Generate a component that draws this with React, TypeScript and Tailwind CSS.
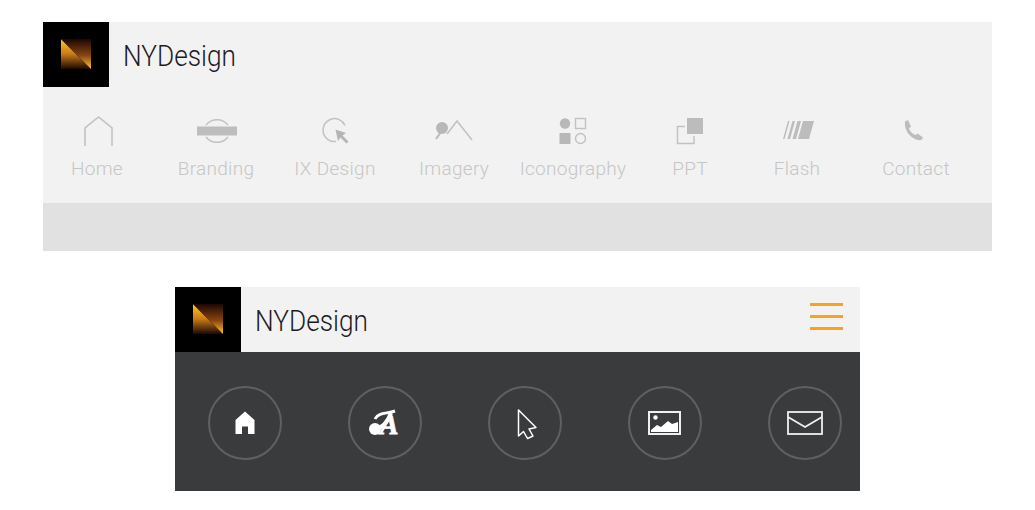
import type { ReactNode } from "react";

const grey = "#c2c2c2";

function Logo({ id }: { id: string }) {
    return (
        <div className="flex h-[65px] w-[66px] shrink-0 items-center justify-center bg-black">
            <svg width="32" height="32" viewBox="0 0 32 32">
                <defs>
                    <linearGradient id={`${id}-a`} x1="0" y1="0" x2="0" y2="1">
                        <stop offset="0" stopColor="#ffcb20" />
                        <stop offset="0.5" stopColor="#c87a18" />
                        <stop offset="1" stopColor="#1c0702" />
                    </linearGradient>
                    <linearGradient id={`${id}-b`} x1="0" y1="0" x2="0" y2="1">
                        <stop offset="0" stopColor="#1c0702" />
                        <stop offset="0.55" stopColor="#8a4512" />
                        <stop offset="1" stopColor="#ffcb20" />
                    </linearGradient>
                </defs>
                <polygon points="1,0 1,30 31,30" fill={`url(#${id}-a)`} />
                <polygon points="1,0 31,0 31,30" fill={`url(#${id}-b)`} />
            </svg>
        </div>
    );
}

function Brand() {
    return (
        <span className="ml-[14px] origin-left scale-x-[0.875] pt-[1px] font-['Roboto',sans-serif] text-[30px] font-light text-[#1d1d1f]">
            NYDesign
        </span>
    );
}

const navItems: { label: string; width: string; viewBox: string; icon: ReactNode }[] = [
    {
        label: "Home",
        width: "w-[108px]",
        viewBox: "67 115 60 32",
        icon: <path d="M85 146V128L98.5 117L112 128V146" fill="none" stroke={grey} strokeWidth="1.6" />,
    },
    {
        label: "Branding",
        width: "w-[130px]",
        viewBox: "186 115 60 32",
        icon: (
            <>
                <path d="M206 125A14 14 0 0 1 228 125M206 137A14 14 0 0 0 228 137" fill="none" stroke={grey} strokeWidth="1.5" />
                <rect x="197" y="126.5" width="40" height="9" fill="#bdbdbd" />
            </>
        ),
    },
    {
        label: "IX Design",
        width: "w-[108px]",
        viewBox: "305 115 60 32",
        icon: (
            <>
                <path d="M345 125.5A11.5 11.5 0 1 0 336 141.5" fill="none" stroke={grey} strokeWidth="1.5" />
                <polygon points="335.5,129.5 346,133 342.5,135.5 348.5,141.5 346.5,143.5 340.5,137.5 338,141" fill="#b5b5b5" />
            </>
        ),
    },
    {
        label: "Imagery",
        width: "w-[130px]",
        viewBox: "424 115 60 32",
        icon: (
            <>
                <circle cx="442" cy="128" r="6" fill="#b8b8b8" />
                <path d="M436 139L441 132" fill="none" stroke="#b8b8b8" strokeWidth="2" />
                <path d="M447 134L457 121L472 140" fill="none" stroke={grey} strokeWidth="1.6" />
            </>
        ),
    },
    {
        label: "Iconography",
        width: "w-[108px]",
        viewBox: "543 115 60 32",
        icon: (
            <>
                <circle cx="565" cy="123.5" r="5.2" fill="#b8b8b8" />
                <rect x="575.5" y="118.5" width="10" height="10" fill="none" stroke={grey} strokeWidth="1.4" />
                <rect x="559.5" y="133" width="11" height="11" fill="#b8b8b8" />
                <circle cx="580.5" cy="138.5" r="5" fill="none" stroke={grey} strokeWidth="1.4" />
            </>
        ),
    },
    {
        label: "PPT",
        width: "w-[126px]",
        viewBox: "660 115 60 32",
        icon: (
            <>
                <rect x="687" y="118" width="16" height="16" fill="#bcbcbc" />
                <path d="M685 126.5H677.5V143.5H694V136" fill="none" stroke={grey} strokeWidth="1.5" />
            </>
        ),
    },
    {
        label: "Flash",
        width: "w-[88px]",
        viewBox: "767 115 60 32",
        icon: (
            <g fill="#bcbcbc">
                <polygon points="788,121 789.5,121 784.5,139 783,139" />
                <polygon points="792.5,121 795,121 790,139 787.5,139" />
                <polygon points="797.5,121 801,121 796,139 792.5,139" />
                <polygon points="803,121 814,121 809,139 798,139" />
            </g>
        ),
    },
    {
        label: "Contact",
        width: "w-[150px]",
        viewBox: "886 115 60 32",
        icon: (
            <path
                d="M905 121.5L908 120L911 126.5L909 128.5C910 131.5 912.5 134 915.5 135L917.5 133.5L923 137.5L921.5 140C914 141.5 903.5 132 905 121.5Z"
                fill="#bcbcbc"
            />
        ),
    },
];

function Circle({ viewBox, children }: { viewBox: string; children: ReactNode }) {
    return (
        <div className="flex h-[74px] w-[74px] items-center justify-center rounded-full border-2 border-[#5f6062]">
            <svg width="50" height="40" viewBox={viewBox}>
                {children}
            </svg>
        </div>
    );
}

export default function App() {
    return (
        <div className="min-h-[510px] bg-white pt-[22px]">
            <section className="ml-[43px] w-[949px] bg-[#f2f2f2]">
                <div className="flex items-center">
                    <Logo id="top" />
                    <Brand />
                </div>
                <div className="flex h-[116px] pt-[28px]">
                    {navItems.map((item) => (
                        <div key={item.label} className={`flex flex-col items-center ${item.width}`}>
                            <svg width="60" height="32" viewBox={item.viewBox}>
                                {item.icon}
                            </svg>
                            <span className="mt-[10px] whitespace-nowrap font-['Roboto',sans-serif] text-[19px] font-light leading-6 tracking-[0.3px] text-[#c6c6c6]">
                                {item.label}
                            </span>
                        </div>
                    ))}
                </div>
                <div className="h-[48px] bg-[#e1e1e1]" />
            </section>

            <section className="ml-[175px] mt-[36px] w-[685px]">
                <div className="flex items-center bg-[#f2f2f2]">
                    <Logo id="bottom" />
                    <Brand />
                    <div className="mb-[6px] ml-auto mr-[17px] flex w-[33px] flex-col gap-[9px]">
                        <div className="h-[3px] bg-[#faa21a]" />
                        <div className="h-[3px] bg-[#faa21a]" />
                        <div className="h-[3px] bg-[#faa21a]" />
                    </div>
                </div>
                <div className="flex h-[139px] items-center gap-[66px] bg-[#3a3b3d] pl-[33px] pt-[2px]">
                    <Circle viewBox="0 0 50 40">
                        <path d="M25 8.5L34.5 17V31H28V23.5H22V31H15.5V17Z" fill="#fff" />
                    </Circle>
                    <Circle viewBox="0 0 50 40">
                        <circle cx="15" cy="26" r="6" fill="#fff" />
                        <path d="M15 26C23 25 28 18 31 10" fill="none" stroke="#fff" strokeWidth="4" />
                        <path d="M15 16C18 9 27 11 35 8" fill="none" stroke="#fff" strokeWidth="3" />
                        <text
                            x="29"
                            y="31"
                            textAnchor="middle"
                            fill="#fff"
                            stroke="#fff"
                            strokeWidth="0.8"
                            fontFamily="'Liberation Serif', serif"
                            fontStyle="italic"
                            fontWeight="700"
                            fontSize="28"
                        >
                            A
                        </text>
                    </Circle>
                    <Circle viewBox="0 0 50 40">
                        <path d="M18.5 7V33L23.5 28.5L27.5 35.5L33 33L29 26L36 24.5Z" fill="none" stroke="#fff" strokeWidth="1.5" strokeLinejoin="round" />
                    </Circle>
                    <Circle viewBox="0 0 50 40">
                        <rect x="9" y="9" width="31" height="22" fill="none" stroke="#f0f0f0" strokeWidth="2" />
                        <circle cx="15.5" cy="14.5" r="2.2" fill="#fff" />
                        <path d="M11 27L17 22L21 24L28 18L32 21L38 19V29H11Z" fill="#fff" />
                    </Circle>
                    <Circle viewBox="0 0 50 40">
                        <rect x="8" y="9" width="34" height="22" fill="none" stroke="#f0f0f0" strokeWidth="1.8" />
                        <path d="M8 14L25 24L42 14" fill="none" stroke="#f0f0f0" strokeWidth="1.8" />
                    </Circle>
                </div>
            </section>
        </div>
    );
}
